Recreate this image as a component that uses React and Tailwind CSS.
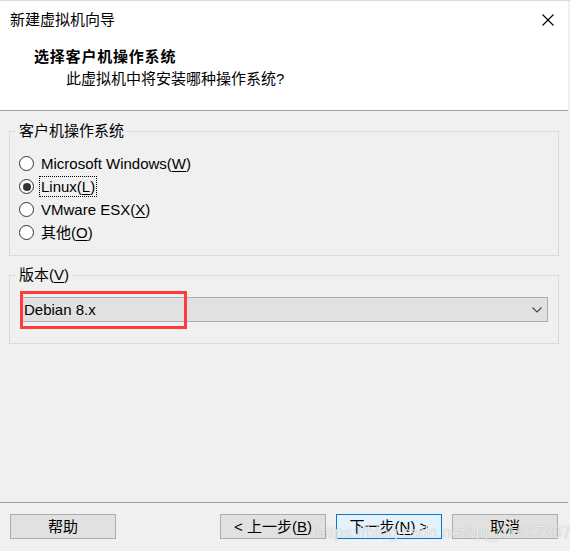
import React from "react";

const osOptions = [
  { label: "Microsoft Windows(", key: "W" },
  { label: "Linux(", key: "L", checked: true },
  { label: "VMware ESX(", key: "X" },
  { label: "其他(", key: "O" },
];

function Radio({ checked }) {
  return (
    <span className="flex h-[15px] w-[15px] items-center justify-center rounded-full border border-[#333] bg-white">
      {checked && <span className="h-[8px] w-[8px] rounded-full bg-[#333]" />}
    </span>
  );
}

function Button({ children, primary }) {
  return (
    <button
      type="button"
      className={
        primary
          ? "flex h-[25px] w-[106px] items-center justify-center border border-[#0078d7] bg-[#e5f1fb] text-[15px] text-black"
          : "flex h-[25px] w-[106px] items-center justify-center border border-[#adadad] bg-[#e1e1e1] text-[15px] text-black"
      }
    >
      {children}
    </button>
  );
}

export default function App() {
  return (
    <div className="relative flex h-[551px] w-[570px] flex-col overflow-hidden border-t border-[#dadada] bg-[#f0f0f0] font-['Liberation_Sans','Noto_Sans_CJK_SC',sans-serif] text-[15px] leading-[20px] text-black">
      {/* header */}
      <div className="mr-[2px] h-[110px] border-b border-[#a0a0a0] bg-white">
        <div className="flex h-[37px] items-center justify-between pl-[10px] pr-[14px]">
          <span>新建虚拟机向导</span>
          <svg width="12" height="12" viewBox="0 0 12 12" className="text-black">
            <path d="M0.5 0.5L11.5 11.5M11.5 0.5L0.5 11.5" stroke="currentColor" strokeWidth="1.1" />
          </svg>
        </div>
        <div className="pl-[34px] pt-[9px] font-bold tracking-[0.8px]">选择客户机操作系统</div>
        <div className="pl-[66px] pt-[2px]">此虚拟机中将安装哪种操作系统?</div>
      </div>

      {/* body */}
      <div className="flex-1 px-[9px] pr-[11px]">
        <fieldset className="mt-[10px] h-[135px] border border-[#dcdcdc]">
          <legend className="ml-[6px] px-[3px] leading-[20px]">客户机操作系统</legend>
          <div className="flex flex-col pt-[11px] pl-[9px]">
            {osOptions.map((o) => (
              <div key={o.key} className="flex h-[23px] items-center gap-[5px]">
                <Radio checked={o.checked} />
                <span
                  className={
                    o.checked
                      ? "border border-dotted border-black px-[1px] leading-[19px]"
                      : "border border-transparent px-[1px] leading-[19px]"
                  }
                >
                  {o.label}
                  <span className="underline underline-offset-2">{o.key}</span>)
                </span>
              </div>
            ))}
          </div>
        </fieldset>

        <fieldset className="mt-[9px] h-[79px] border border-[#dcdcdc]">
          <legend className="ml-[6px] px-[3px] leading-[20px]">
            版本(<span className="underline underline-offset-2">V</span>)
          </legend>
          <div className="relative mx-[10px] mt-[12px] flex h-[25px] items-center justify-between border border-[#adadad] bg-[#e1e1e1] pl-[3px] pr-[5px]">
            <span>Debian 8.x</span>
            <svg width="10" height="6" viewBox="0 0 10 6">
              <path d="M0.5 0.5L5 5L9.5 0.5" fill="none" stroke="#444" strokeWidth="1.1" />
            </svg>
            <div className="absolute left-[-1px] top-[-7px] h-[38px] w-[167px] border-[3px] border-[#ff3b3b]" />
          </div>
        </fieldset>
      </div>

      {/* footer */}
      <div className="mr-[2px] h-[49px] border-t border-[#a0a0a0]">
        <div className="flex items-center pl-[10px] pt-[11px]">
          <Button>帮助</Button>
          <div className="ml-[104px] flex gap-[10px]">
            <Button>
              &lt; 上一步(<span className="underline underline-offset-2">B</span>)
            </Button>
            <Button primary>
              下一步(<span className="underline underline-offset-2">N</span>) &gt;
            </Button>
            <Button>取消</Button>
          </div>
        </div>
      </div>

      <div className="pointer-events-none absolute left-[316px] top-[522px] text-[16px] tracking-[0.3px] text-white/80 [text-shadow:0_0_1px_rgba(0,0,0,0.35)]">
        https://blog.csdn.net/qq_41637307
      </div>
    </div>
  );
}
